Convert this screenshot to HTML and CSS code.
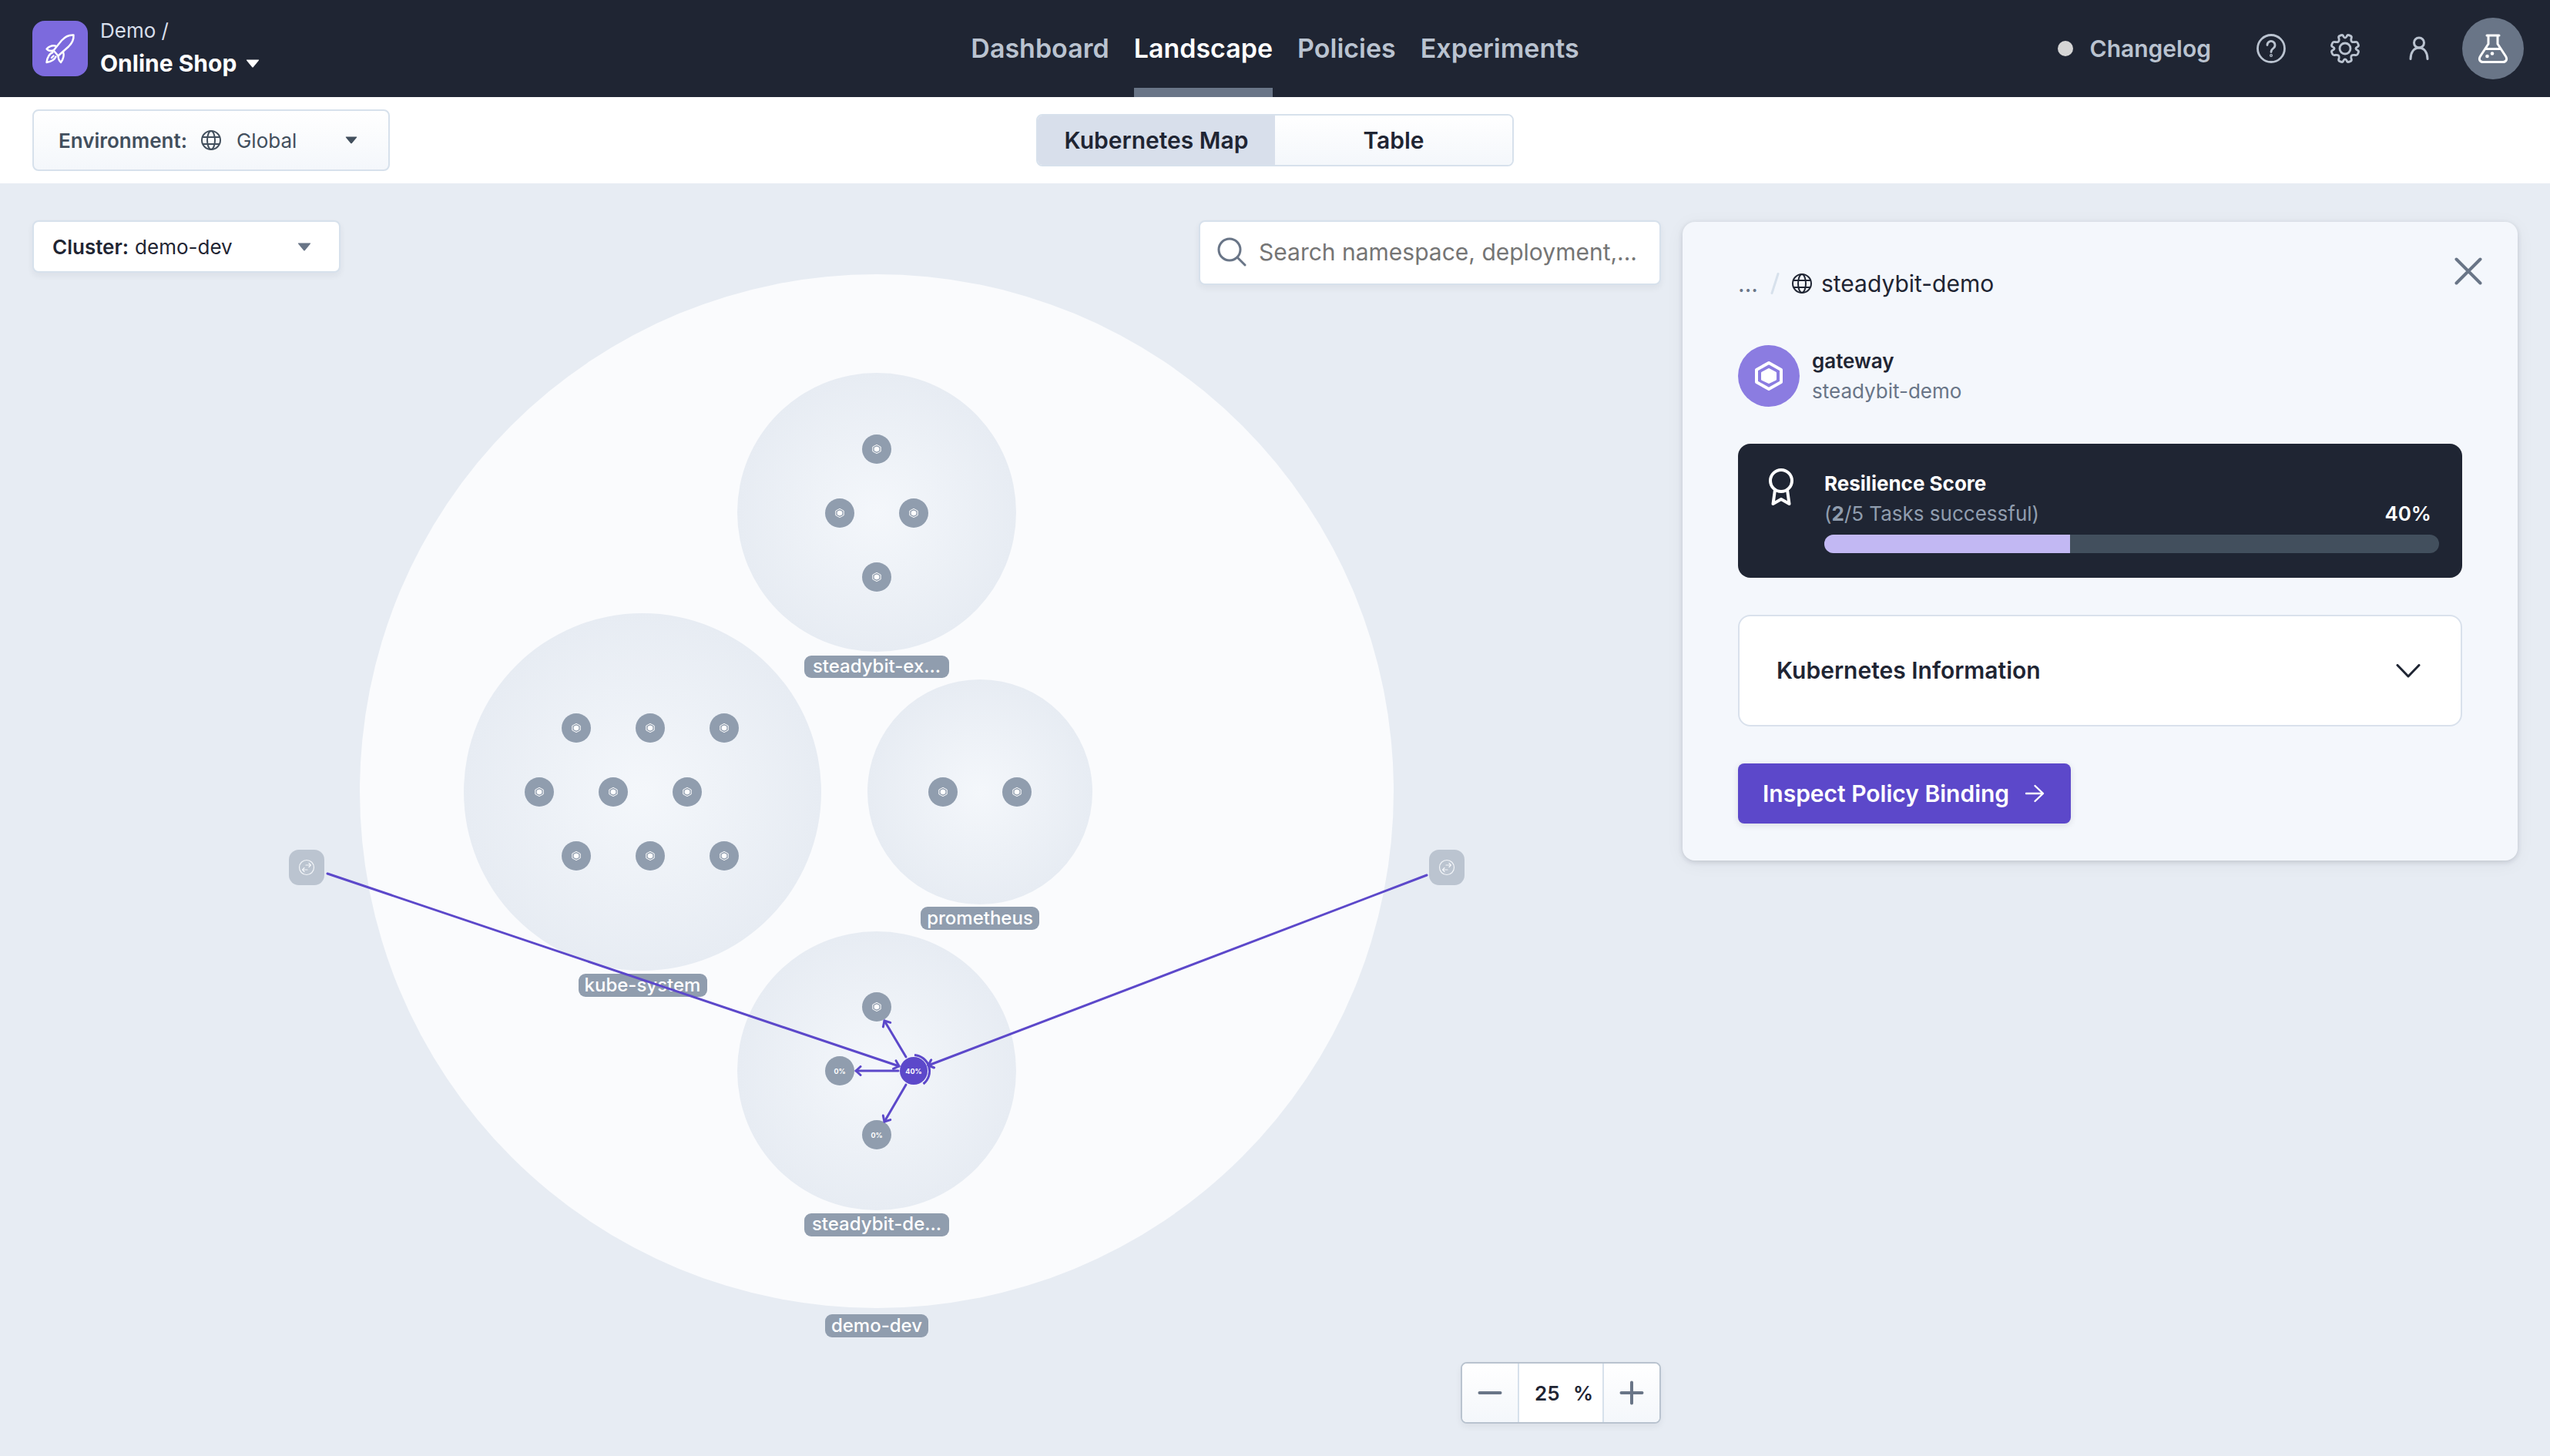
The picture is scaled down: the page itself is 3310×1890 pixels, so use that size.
FILE: index.html
```html
<!DOCTYPE html>
<html lang="en">
<head>
<meta charset="utf-8">
<title>Landscape</title>
<link rel="stylesheet" href="styles.css">
</head>
<body>
<svg class="sprite" aria-hidden="true">
  <symbol id="globe" viewBox="0 0 26 26">
    <g fill="none" stroke="currentColor" stroke-width="2">
      <circle cx="13" cy="13" r="12"/>
      <ellipse cx="13" cy="13" rx="5" ry="12"/>
      <path d="M2 9h22M2 18h22"/>
    </g>
  </symbol>
  <symbol id="caret" viewBox="0 0 18 11">
    <path d="M1.500 0.500h15q1.200 0 .4 1.100l-7 8.300q-.9 1-1.800 0l-7-8.300q-.8-1.100.4-1.100z" fill="currentColor"/>
  </symbol>
</svg>

<header class="topbar">
  <div class="brand">
    <span class="brand-logo">
      <svg width="40" height="40" viewBox="0 0 40 40" fill="none" stroke="currentColor" stroke-width="2.400" stroke-linejoin="round" stroke-linecap="round">
        <path d="M37.500 2.500C31 2 26.500 4.500 22 9.500L11.500 22.500l6 7L31 17.500C36 12.500 38 8.500 37.500 2.500z"/>
        <path d="M15.500 17c-4-1.500-9-.5-13 3.500C4.500 23 8 23.500 11.500 22.500M24 24c1.500 5 0 10-3 14-2-2-3.500-5-3.500-8.500"/>
        <path d="M10.500 25c-4.500 1.500-7 6-8 13C8 37 12.500 35.500 14.500 30.500M9 32l2.500-2.500"/>
      </svg>
    </span>
    <div class="brand-text">
      <a class="brand-tenant" href="#">Demo /</a>
      <button class="brand-team" type="button">Online Shop <svg class="caret" width="18" height="11"><use href="#caret"/></svg></button>
    </div>
  </div>
  <nav class="nav">
    <a href="#">Dashboard</a>
    <a class="active" href="#" aria-current="page">Landscape</a>
    <a href="#">Policies</a>
    <a href="#">Experiments</a>
  </nav>
  <div class="tools">
    <a class="changelog" href="#"><span class="dot"></span>Changelog</a>
    <button class="tool" type="button" aria-label="Help">
      <svg width="40" height="40" viewBox="0 0 40 40" fill="none" stroke="currentColor" stroke-width="2.800" stroke-linecap="round">
        <circle cx="20" cy="20" r="17.500"/>
        <path d="M15 15.500a5 5 0 1 1 8 4c-2 1.500-3 2.500-3 5"/>
        <circle cx="20" cy="29" r=".6"/>
      </svg>
    </button>
    <button class="tool" type="button" aria-label="Settings">
      <svg width="40" height="40" viewBox="0 0 40 40" fill="none" stroke="currentColor" stroke-width="2.800" stroke-linejoin="round">
        <circle cx="20" cy="20" r="7"/>
        <path d="M17.900 4.400Q17.300 2.100 15.100 2.600L13.200 3.400Q10.900 4.300 11.900 6.600L12.200 8.300Q12.400 11.800 8.800 11.700L6.600 11.500Q4.300 10.900 3.400 13.200L2.700 15Q1.900 17.200 4.200 17.900Q8 20 4.200 22.100Q1.900 22.800 2.700 25L3.400 26.800Q4.300 29.100 6.600 28.500L8.800 28.300Q12.400 28.200 12.200 31.700L11.900 33.400Q10.900 35.700 13.200 36.600L15.100 37.400Q17.300 37.900 17.900 35.600Q20 32 22.100 35.600Q22.700 37.900 24.900 37.400L26.800 36.600Q29.100 35.700 28.100 33.400L27.800 31.700Q27.600 28.200 31.200 28.300L33.400 28.500Q35.700 29.100 36.600 26.800L37.300 25Q38.100 22.800 35.800 22.100Q32 20 35.800 17.900Q38.100 17.200 37.300 15L36.600 13.200Q35.700 10.900 33.400 11.500L31.200 11.700Q27.600 11.800 27.800 8.300L28.100 6.600Q29.100 4.300 26.800 3.400L24.900 2.600Q22.700 2.100 22.100 4.400Q20 8 17.900 4.400Z"/>
      </svg>
    </button>
    <button class="tool" type="button" aria-label="Account">
      <svg width="40" height="40" viewBox="0 0 40 40" fill="none" stroke="currentColor" stroke-width="3" stroke-linecap="round">
        <circle cx="20" cy="12.500" r="6.500"/>
        <path d="M9 33.500c0-8 4-14.500 11-14.500s11 6.500 11 14.500"/>
      </svg>
    </button>
    <button class="lab" type="button" aria-label="Experiment lab">
      <svg width="40" height="40" viewBox="0 0 40 40" fill="none" stroke="currentColor" stroke-width="3" stroke-linejoin="round" stroke-linecap="round">
        <path d="M12 3h16M14 3v11L3.500 30c-2.500 4-.5 7.500 3.500 7.500h26c4 0 6-3.500 3.500-7.500L26 14V3M11 20.500h18"/>
        <circle cx="19" cy="26.500" r="2.300" fill="currentColor" stroke="none"/>
        <circle cx="12.500" cy="30" r="2.300" fill="currentColor" stroke="none"/>
      </svg>
    </button>
  </div>
</header>

<div class="subbar">
  <div class="picker environment">
    <label for="environment">Environment:</label>
    <svg class="globe" width="26" height="26"><use href="#globe"/></svg>
    <select id="environment"><option>Global</option></select>
    <svg class="caret" width="16" height="10"><use href="#caret"/></svg>
  </div>
  <div class="segments">
    <button class="selected" type="button" aria-pressed="true">Kubernetes Map</button>
    <button type="button" aria-pressed="false">Table</button>
  </div>
</div>

<main class="workspace">
  <section class="map">
    <svg class="canvas" viewBox="42 286 2114 1562" role="img" aria-label="Kubernetes map">
      <defs>
        <radialGradient id="namespace">
          <stop offset="0" stop-color="#f4f7fb"/>
          <stop offset="1" stop-color="#e7ecf3"/>
        </radialGradient>
        <g id="pod">
          <circle r="19" fill="#909dae"/>
          <path d="M0-5.600L5.200-2.900V2.900L0 5.600L-5.200 2.900V-2.900z" fill="none" stroke="#fff" stroke-width="1" stroke-linejoin="round"/>
          <path d="M0-3.600L3.300-1.900V1.900L0 3.600L-3.300 1.900V-1.900z" fill="#fff"/>
        </g>
        <g id="external" opacity=".5">
          <rect x="-23" y="-23" width="46" height="46" rx="13" fill="#909dae"/>
          <g fill="none" stroke="#fff" stroke-width="1.200" stroke-linecap="round" stroke-linejoin="round">
            <circle r="9.500"/>
            <path d="M-1-3h6M3-5.500l2.500 2.500L3-.5M1 3h-6M-3 .5L-5.500 3-3 5.500"/>
          </g>
        </g>
        <marker id="arrow" viewBox="-9 -7 10 14" refX="-1" refY="0" markerWidth="10" markerHeight="14" markerUnits="userSpaceOnUse" orient="auto">
          <path d="M-7-5.500L-1 0L-7 5.500" fill="none" stroke="#5c48ca" stroke-width="3" stroke-linecap="round" stroke-linejoin="round"/>
        </marker>
      </defs>

      <circle cx="1138" cy="1027" r="671" fill="#fafbfd"/>
      <g fill="url(#namespace)">
        <circle cx="1138" cy="665" r="181"/>
        <circle cx="834" cy="1028" r="232"/>
        <circle cx="1272" cy="1028" r="146"/>
        <circle cx="1138" cy="1390" r="181"/>
      </g>

      <use href="#pod" x="1138" y="583"/>
      <use href="#pod" x="1090" y="666"/>
      <use href="#pod" x="1186" y="666"/>
      <use href="#pod" x="1138" y="749"/>

      <use href="#pod" x="748" y="945"/>
      <use href="#pod" x="844" y="945"/>
      <use href="#pod" x="940" y="945"/>
      <use href="#pod" x="700" y="1028"/>
      <use href="#pod" x="796" y="1028"/>
      <use href="#pod" x="892" y="1028"/>
      <use href="#pod" x="748" y="1111"/>
      <use href="#pod" x="844" y="1111"/>
      <use href="#pod" x="940" y="1111"/>

      <use href="#pod" x="1224" y="1028"/>
      <use href="#pod" x="1320" y="1028"/>

      <g class="map-label">
        <rect x="1044" y="851" width="188" height="29" rx="9"/><text x="1138" y="873">steadybit-ex...</text>
        <rect x="751" y="1264" width="167" height="30" rx="9"/><text x="834" y="1287">kube-system</text>
        <rect x="1195" y="1177" width="154" height="30" rx="9"/><text x="1272" y="1200">prometheus</text>
        <rect x="1044" y="1575" width="188" height="30" rx="9"/><text x="1138" y="1597">steadybit-de...</text>
        <rect x="1071" y="1706" width="134" height="30" rx="9"/><text x="1138" y="1729">demo-dev</text>
      </g>

      <use href="#external" x="398" y="1126"/>
      <use href="#external" x="1878" y="1126"/>

      <use href="#pod" x="1138" y="1307"/>
      <g class="score">
        <circle cx="1090" cy="1390" r="19"/><text x="1090" y="1394">0%</text>
        <circle cx="1138" cy="1473" r="19"/><text x="1138" y="1477">0%</text>
      </g>
      <circle cx="1186" cy="1390" r="22" fill="#f1f3fa"/>
      <g class="edges">
        <path d="M425 1134L1167 1384"/>
        <path d="M1852 1136L1205 1383"/>
        <path d="M1176 1372L1148 1325"/>
        <path d="M1166 1390H1111"/>
        <path d="M1176 1408L1148 1456"/>
      </g>
      <g class="score current">
        <circle cx="1186" cy="1390" r="18"/><text x="1186" y="1394">40%</text>
        <path d="M1187 1369.500A21 21 0 0 1 1198.500 1407"/>
      </g>
    </svg>

    <div class="map-top">
      <div class="picker cluster">
        <label for="cluster">Cluster:</label>
        <select id="cluster"><option>demo-dev</option></select>
        <svg class="caret" width="18" height="11"><use href="#caret"/></svg>
      </div>
      <label class="search">
        <svg width="38" height="38" viewBox="0 0 38 38" fill="none" stroke="currentColor" stroke-width="3" stroke-linecap="round">
          <circle cx="16" cy="16" r="14"/><path d="M26.500 26.500L36 36"/>
        </svg>
        <input type="text" aria-label="Search" placeholder="Search namespace, deployment,...">
      </label>
    </div>

    <div class="zoom">
      <button type="button" aria-label="Zoom out">
        <svg width="32" height="32" viewBox="0 0 32 32" stroke="currentColor" stroke-width="4" stroke-linecap="round"><path d="M2.500 16h27"/></svg>
      </button>
      <label class="zoom-value"><input type="text" aria-label="Zoom level" value="25"><span>%</span></label>
      <button type="button" aria-label="Zoom in">
        <svg width="32" height="32" viewBox="0 0 32 32" stroke="currentColor" stroke-width="4" stroke-linecap="round"><path d="M2.500 16h27M16 2.500v27"/></svg>
      </button>
    </div>
  </section>

  <aside class="panel">
    <div class="panel-head">
      <nav class="crumbs" aria-label="Breadcrumb">
        <a class="crumb-more" href="#">...</a>
        <svg class="crumb-slash" width="12" height="28" viewBox="0 0 12 28"><path d="M10 1.500L2 26.500" stroke="currentColor" stroke-width="3" stroke-linecap="round"/></svg>
        <a class="crumb" href="#"><svg class="globe" width="26" height="26"><use href="#globe"/></svg>steadybit-demo</a>
      </nav>
      <button class="close" type="button" aria-label="Close">
        <svg width="36" height="36" viewBox="0 0 36 36" stroke="currentColor" stroke-width="4" stroke-linecap="round"><path d="M2.500 2.500l31 31M33.500 2.500l-31 31"/></svg>
      </button>
    </div>
    <div class="panel-body">
      <div class="workload">
        <span class="workload-icon">
          <svg width="40" height="40" viewBox="0 0 40 40">
            <path d="M20 3L36 12V28L20 37L4 28V12z" fill="none" stroke="#fff" stroke-width="4" stroke-linejoin="round"/>
            <path d="M20 11.500L28.500 16V24.500L20 28.500L11.500 24.500V16z" fill="#fff" stroke="#fff" stroke-width="3" stroke-linejoin="round"/>
          </svg>
        </span>
        <div class="workload-text">
          <strong>gateway</strong>
          <span>steadybit-demo</span>
        </div>
      </div>

      <div class="resilience">
        <svg width="48" height="48" viewBox="0 0 48 48" fill="none" stroke="#fff" stroke-width="4" stroke-linejoin="round">
          <circle cx="24" cy="16" r="14"/>
          <path d="M16 28l-2.500 18L24 40l10.500 6L32 28"/>
        </svg>
        <div class="resilience-text">
          <strong>Resilience Score</strong>
          <div class="resilience-row">
            <span class="tasks">(<b>2</b>/5 Tasks successful)</span>
            <span class="percent">40%</span>
          </div>
          <div class="bar"><div class="bar-fill" style="width: 40%"></div></div>
        </div>
      </div>

      <button class="info" type="button" aria-expanded="false">
        Kubernetes Information
        <svg width="32" height="18" viewBox="0 0 32 18" fill="none" stroke="currentColor" stroke-width="3" stroke-linecap="round" stroke-linejoin="round"><path d="M2 1.500L16 16L30 1.500"/></svg>
      </button>

      <button class="inspect" type="button">
        Inspect Policy Binding
        <svg width="26" height="24" viewBox="0 0 26 24" fill="none" stroke="currentColor" stroke-width="2.400" stroke-linecap="round" stroke-linejoin="round"><path d="M2 12h22M13.500 2L24 12L13.500 22"/></svg>
      </button>
    </div>
  </aside>
</main>
</body>
</html>
```
FILE: styles.css
```css
:root {
  --ink: #1f2533;
  --slate: #424f5d;
  --muted: #697587;
  --line: #d7e1ec;
  --purple: #5c48ca;
}

* {
  box-sizing: border-box;
}

body {
  margin: 0;
  min-height: 100vh;
  display: flex;
  flex-direction: column;
  background: #e7ecf3;
  color: var(--ink);
  font-family: Inter, "Liberation Sans", sans-serif;
  font-size: 26px;
}

button,
input,
select {
  margin: 0;
  padding: 0;
  border: 0;
  background: none;
  color: inherit;
  font: inherit;
  appearance: none;
}

a {
  color: inherit;
  text-decoration: none;
}

svg {
  display: block;
  flex: none;
}

.sprite {
  position: absolute;
  width: 0;
  height: 0;
}

/* Top bar */

.topbar {
  display: grid;
  grid-template-columns: 1fr auto 1fr;
  align-items: center;
  height: 126px;
  padding: 0 34px;
  background: var(--ink);
  color: #bac3d0;
}

.brand {
  display: flex;
  align-items: center;
  gap: 16px;
  padding-left: 8px;
}

.brand-logo {
  display: grid;
  place-items: center;
  width: 72px;
  height: 72px;
  border-radius: 16px;
  background: #7c6add;
  color: #fff;
}

.brand-text {
  display: flex;
  flex-direction: column;
  align-items: flex-start;
  padding-bottom: 4px;
  line-height: 42px;
}

.brand-tenant {
  color: #d8dfeb;
}

.brand-team {
  display: flex;
  align-items: center;
  gap: 12px;
  color: #fff;
  font-size: 30px;
  font-weight: 700;
}

.nav {
  display: flex;
  align-self: stretch;
  gap: 32px;
  font-size: 34px;
  font-weight: 600;
  line-height: 126px;
}

.nav .active {
  color: #fff;
  box-shadow: inset 0 -12px #697587;
}

.tools {
  display: flex;
  align-items: center;
  justify-content: flex-end;
}

.changelog {
  display: flex;
  align-items: center;
  gap: 22px;
  margin-right: 30px;
  font-size: 30px;
  font-weight: 600;
}

.dot {
  width: 20px;
  height: 20px;
  border-radius: 50%;
  background: #d5d5d5;
}

.tool {
  padding: 28px;
}

.lab {
  display: grid;
  place-items: center;
  width: 80px;
  height: 80px;
  margin-left: 8px;
  border-radius: 50%;
  background: #697587;
  color: #fff;
}

/* View bar */

.subbar {
  display: grid;
  grid-template-columns: 1fr auto 1fr;
  align-items: center;
  padding: 16px 42px;
  background: #fff;
}

.picker {
  display: flex;
  align-items: center;
  border: 2px solid var(--line);
  border-radius: 8px;
}

.picker label {
  font-weight: 600;
}

.picker select {
  flex: 1;
  min-width: 0;
}

.picker .caret {
  pointer-events: none;
}

.environment {
  width: 464px;
  height: 80px;
  padding: 0 40px 0 32px;
  background: linear-gradient(#fff, #f4f7fb);
  color: var(--slate);
}

.environment .globe {
  margin: 0 20px 0 18px;
}

.segments {
  display: grid;
  grid-template-columns: 1fr 1fr;
  width: 620px;
  height: 68px;
  overflow: hidden;
  border: 2px solid var(--line);
  border-radius: 8px;
  font-size: 30px;
  font-weight: 600;
}

.segments button {
  background: linear-gradient(#fff, #f4f7fb);
}

.segments .selected {
  background: #d8dfeb;
}

/* Workspace */

.workspace {
  flex: 1;
  display: grid;
  grid-template-columns: 1fr 1084px;
  align-items: start;
  gap: 28px;
  padding: 48px 42px 42px;
}

.map {
  display: grid;
}

.map > * {
  grid-area: 1 / 1;
}

.canvas {
  width: 100%;
  overflow: visible;
}

.map-label rect {
  fill: #909dae;
}

.map-label text {
  fill: #fff;
  font-size: 24px;
  font-weight: 500;
  text-anchor: middle;
}

.edges path {
  fill: none;
  stroke: var(--purple);
  stroke-width: 3px;
  stroke-linecap: round;
  marker-end: url(#arrow);
}

.score circle {
  fill: #909dae;
}

.score text {
  fill: #fff;
  font-size: 9px;
  font-weight: 700;
  text-anchor: middle;
}

.score.current circle {
  fill: var(--purple);
}

.score.current path {
  fill: none;
  stroke: var(--purple);
  stroke-width: 3px;
}

.map-top {
  display: flex;
  align-items: flex-start;
  align-self: start;
  justify-content: space-between;
}

.cluster {
  width: 400px;
  height: 68px;
  padding: 0 36px 0 24px;
  gap: 8px;
  background: #fff;
  box-shadow: 0 4px 8px rgba(31, 37, 51, .06);
}

.cluster .caret {
  color: var(--muted);
}

.search {
  display: flex;
  align-items: center;
  gap: 16px;
  width: 600px;
  height: 84px;
  padding: 0 24px 2px 22px;
  border: 2px solid var(--line);
  border-radius: 8px;
  background: #fff;
  box-shadow: 0 4px 8px rgba(31, 37, 51, .06);
  color: var(--muted);
  font-size: 30px;
}

.search input {
  flex: 1;
  min-width: 0;
  height: 48px;
}

.search input::placeholder {
  color: #757575;
  opacity: 1;
}

.zoom {
  display: grid;
  grid-template-columns: 72px 112px 72px;
  align-self: end;
  justify-self: end;
  height: 80px;
  overflow: hidden;
  border: 2px solid #b9c3cf;
  border-radius: 8px;
  background: #fff;
  box-shadow: 0 4px 8px rgba(31, 37, 51, .06);
}

.zoom button {
  display: grid;
  place-items: center;
  background: linear-gradient(#fff, #f4f7fb);
  color: var(--muted);
}

.zoom-value {
  display: flex;
  align-items: center;
  gap: 6px;
  padding-left: 20px;
  border: solid var(--line);
  border-width: 0 2px;
  font-weight: 600;
}

.zoom-value input {
  width: 44px;
}

/* Details panel */

.panel {
  margin-top: 2px;
  border-radius: 16px;
  background: #f4f7fc;
  box-shadow: 0 2px 6px rgba(31, 37, 51, .16), 0 4px 24px rgba(31, 37, 51, .05);
}

.panel-head {
  display: flex;
  align-items: flex-start;
  justify-content: space-between;
  padding: 40px 40px 0 72px;
}

.crumbs {
  display: flex;
  align-items: center;
  gap: 16px;
  padding-top: 16px;
  font-size: 30px;
  line-height: 48px;
}

.crumb-more {
  color: var(--muted);
}

.crumb-slash {
  color: var(--line);
}

.crumb {
  display: flex;
  align-items: center;
  gap: 12px;
}

.close {
  padding: 6px;
  color: var(--muted);
}

.panel-body {
  display: flex;
  flex-direction: column;
  align-items: stretch;
  gap: 48px;
  padding: 56px 72px 48px;
}

.workload {
  display: flex;
  align-items: center;
  gap: 16px;
}

.workload-icon {
  display: grid;
  place-items: center;
  width: 80px;
  height: 80px;
  border-radius: 50%;
  background: #8b7ce1;
}

.workload-text {
  display: flex;
  flex-direction: column;
  line-height: 39px;
}

.workload-text strong {
  font-weight: 600;
}

.workload-text span {
  color: var(--muted);
}

.resilience {
  display: flex;
  align-items: flex-start;
  gap: 32px;
  padding: 32px 30px 32px 32px;
  border-radius: 16px;
  background: var(--ink);
  color: #fff;
  line-height: 39px;
}

.resilience-text {
  flex: 1;
  display: flex;
  flex-direction: column;
}

.resilience-row {
  display: flex;
  justify-content: space-between;
  padding-right: 10px;
}

.tasks {
  color: #909dae;
}

.percent {
  font-weight: 600;
}

.bar {
  height: 24px;
  margin-top: 8px;
  overflow: hidden;
  border-radius: 12px;
  background: var(--slate);
}

.bar-fill {
  height: 100%;
  background: #c2b8f3;
}

.info {
  display: flex;
  align-items: center;
  justify-content: space-between;
  padding: 48px 52px 48px 48px;
  border: 2px solid #d9e1ec;
  border-radius: 16px;
  background: #fff;
  font-size: 30px;
  font-weight: 600;
  line-height: 45px;
}

.inspect {
  display: flex;
  align-items: center;
  align-self: flex-start;
  gap: 20px;
  height: 78px;
  padding: 0 34px 0 32px;
  border-radius: 8px;
  background: var(--purple);
  box-shadow: 0 2px 8px rgba(31, 37, 51, .12);
  color: #fff;
  font-size: 30px;
  font-weight: 600;
}
```
